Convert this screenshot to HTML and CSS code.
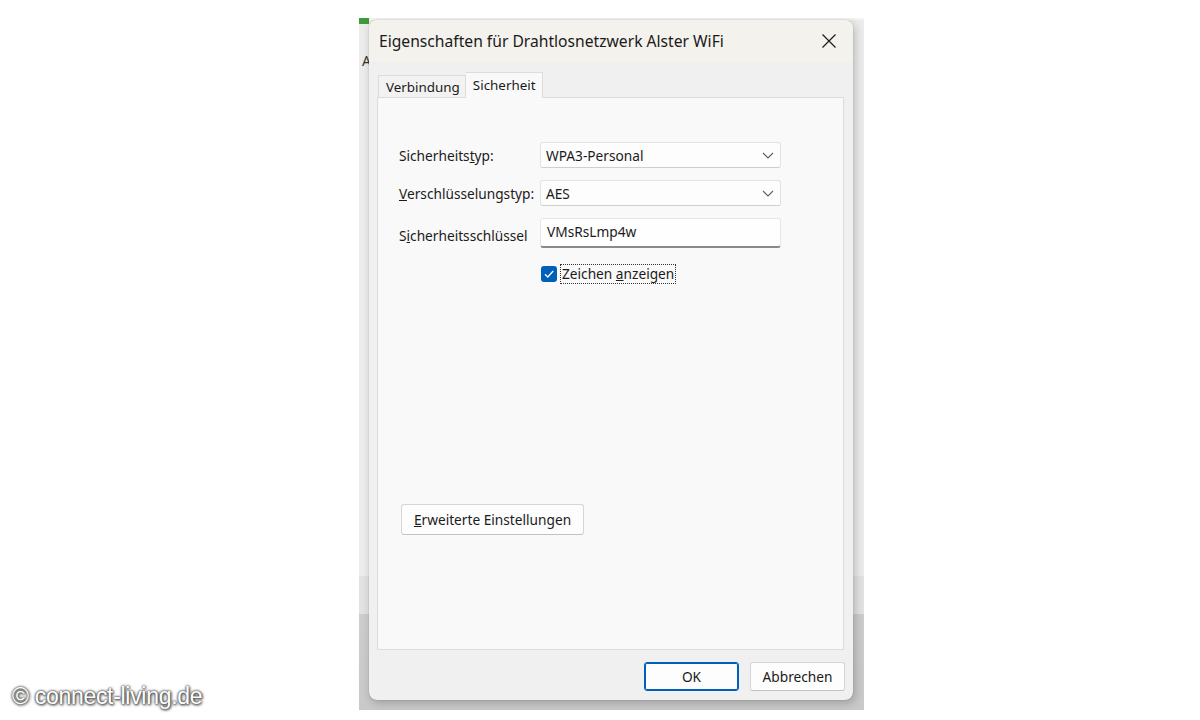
FILE: index.html
```html
<!DOCTYPE html>
<html lang="de">
<head>
  <meta charset="UTF-8" />
  <title>Eigenschaften für Drahtlosnetzwerk Alster WiFi</title>
  <link rel="stylesheet" href="styles.css">
</head>
<body>

  <div class="hintergrund">
    <div class="rest-oben"><span class="gruen"></span></div>
    <span class="rest-a">A</span>

    <div class="dialog">
      <div class="titelleiste">
        <span class="titel">Eigenschaften für Drahtlosnetzwerk Alster WiFi</span>
        <svg class="schliessen" width="16" height="16" viewBox="0 0 16 16">
          <path d="M1.5 1.5 L14.5 14.5 M14.5 1.5 L1.5 14.5" stroke="#1a1a1a" stroke-width="1.2" fill="none" />
        </svg>
      </div>

      <div class="inhalt">
        <div class="reiter">
          <div class="reiter-eintrag">Verbindung</div>
          <div class="reiter-eintrag aktiv">Sicherheit</div>
        </div>

        <div class="panel">
          <div class="formular">
            <label>Sicherheits<u>t</u>yp:</label>
            <div class="auswahl">
              <span>WPA3-Personal</span>
              <svg width="12" height="7" viewBox="0 0 12 7"><path d="M1 1 L6 6 L11 1" stroke="#606060" stroke-width="1.1" fill="none" /></svg>
            </div>

            <label><u>V</u>erschlüsselungstyp:</label>
            <div class="auswahl">
              <span>AES</span>
              <svg width="12" height="7" viewBox="0 0 12 7"><path d="M1 1 L6 6 L11 1" stroke="#606060" stroke-width="1.1" fill="none" /></svg>
            </div>

            <label>S<u>i</u>cherheitsschlüssel</label>
            <div class="eingabe">VMsRsLmp4w</div>

            <span></span>
            <div class="haken-zeile">
              <span class="haken">
                <svg width="12" height="10" viewBox="0 0 12 10"><path d="M2 5.2 L4.8 8 L10.2 2" stroke="#fff" stroke-width="1.3" fill="none" /></svg>
              </span>
              <span class="haken-text">Zeichen <u>a</u>nzeigen</span>
            </div>
          </div>

          <button class="knopf erweitert"><u>E</u>rweiterte Einstellungen</button>
        </div>

        <div class="knopfleiste">
          <button class="knopf ok">OK</button>
          <button class="knopf">Abbrechen</button>
        </div>
      </div>
    </div>
  </div>

  <!-- Wasserzeichen unten links -->
  <div class="wasserzeichen">© connect-living.de</div>

</body>
</html>
```

FILE: styles.css
```css
html, body {
  margin: 0; padding: 0;
  height: 720px;
  overflow: hidden;
  background: white;
  font-family: 'Noto Sans', 'Open Sans', sans-serif;
  color: #1b1b1b;
}

body {
  padding-top: 18px;
  box-sizing: border-box;
  position: relative;
}

.hintergrund {
  margin-left: 359px;
  width: 505px;
  height: 692px;
  background: linear-gradient(to bottom, #ececec 0, #ececec 558px, #e2e2e2 558px, #e2e2e2 596px, #cdcdcd 596px, #c9c9c9 100%);
  position: relative;
  overflow: hidden;
}

.rest-oben {
  height: 2px;
  background: #f4f4f4;
}

.gruen {
  position: absolute;
  top: 0; left: 0;
  width: 10px;
  height: 6px;
  background: #3b9a3b;
}

.rest-a {
  position: absolute;
  top: 33px; left: 3px;
  font-size: 14px;
  color: #333;
}

.dialog {
  position: relative;
  margin-left: 10px;
  width: 484px;
  height: 680px;
  background: #f0f0f0;
  border-radius: 8px;
  box-shadow: 0 0 1px rgba(0,0,0,0.4), 2px 3px 10px rgba(0,0,0,0.22);
  overflow: hidden;
  display: flex;
  flex-direction: column;
}

.titelleiste {
  height: 42px;
  flex: none;
  background: #f4f2ed;
  display: flex;
  align-items: center;
  justify-content: space-between;
  padding: 0 16px 0 10px;
}

.titel {
  font-size: 15.65px;
  color: #1a1a1a;
}

.inhalt {
  flex: 1;
  display: flex;
  flex-direction: column;
  padding: 9px 9px 0 8px;
}

.reiter {
  display: flex;
  align-items: flex-end;
  height: 26px;
  padding-left: 1px;
}

.reiter-eintrag {
  font-size: 13.4px;
  height: 22px;
  line-height: 22px;
  padding: 0 5px 0 7px;
  background: #f2f2f2;
  border: 1px solid #dcdcdc;
  border-bottom: none;
  box-sizing: border-box;
}

.reiter-eintrag.aktiv {
  height: 26px;
  line-height: 24px;
  padding: 0 6px 0 7px;
  background: #f9f9f9;
  border-left: none;
  margin-bottom: -1px;
  position: relative;
}

.panel {
  height: 553px;
  box-sizing: border-box;
  background: #f9f9f9;
  border: 1px solid #dcdcdc;
  padding: 44px 0 0 21px;
}

.formular {
  display: grid;
  grid-template-columns: 141px 241px;
  row-gap: 12px;
  align-items: center;
  font-size: 13.7px;
}

.formular label {
  white-space: nowrap;
}

.auswahl {
  height: 26px;
  box-sizing: border-box;
  background: #fdfdfd;
  border: 1px solid #e3e3e3;
  border-bottom-color: #cfcfcf;
  border-radius: 3px;
  display: flex;
  align-items: center;
  justify-content: space-between;
  padding: 0 6px 0 5px;
}

.eingabe {
  height: 30px;
  box-sizing: border-box;
  background: #fefefe;
  border: 1px solid #e6e6e6;
  border-bottom: 2px solid #8a8a8a;
  border-radius: 3px;
  padding: 3px 6px 0;
  margin-bottom: 4px;
}

.haken-zeile {
  display: flex;
  align-items: center;
  gap: 3px;
  margin-left: 1px;
}

.haken {
  width: 16px;
  height: 16px;
  border-radius: 3px;
  background: #005fb8;
  display: flex;
  align-items: center;
  justify-content: center;
}

.haken-text {
  border: 1px dotted #333;
  padding: 0 1px;
  line-height: 18px;
}

.knopf {
  font-family: 'Noto Sans', 'Open Sans', sans-serif;
  font-size: 13.7px;
  color: #1b1b1b;
  background: #fdfdfd;
  border: 1px solid #d6d6d6;
  border-bottom-color: #c2c2c2;
  border-radius: 3px;
  height: 29px;
  padding: 0;
}

.erweitert {
  display: block;
  margin: 220px 0 0 2px;
  width: 183px;
  height: 31px;
}

.knopfleiste {
  display: flex;
  justify-content: flex-end;
  gap: 11px;
  padding: 12px 0 0;
  margin-right: -1px;
}

.knopfleiste .knopf {
  width: 95px;
}

.knopf.ok {
  border: 1px solid #005fb8;
  box-shadow: inset 0 0 0 1px #005fb8;
}

.wasserzeichen {
  position: absolute;
  left: 12px;
  top: 683px;
  font-family: 'Liberation Sans', Arial, sans-serif;
  font-size: 23px;
  color: #fff;
  text-shadow: 0 0 2px #444, 0 0 3px #555, 1px 1px 3px #333;
  letter-spacing: -0.3px;
}
```
